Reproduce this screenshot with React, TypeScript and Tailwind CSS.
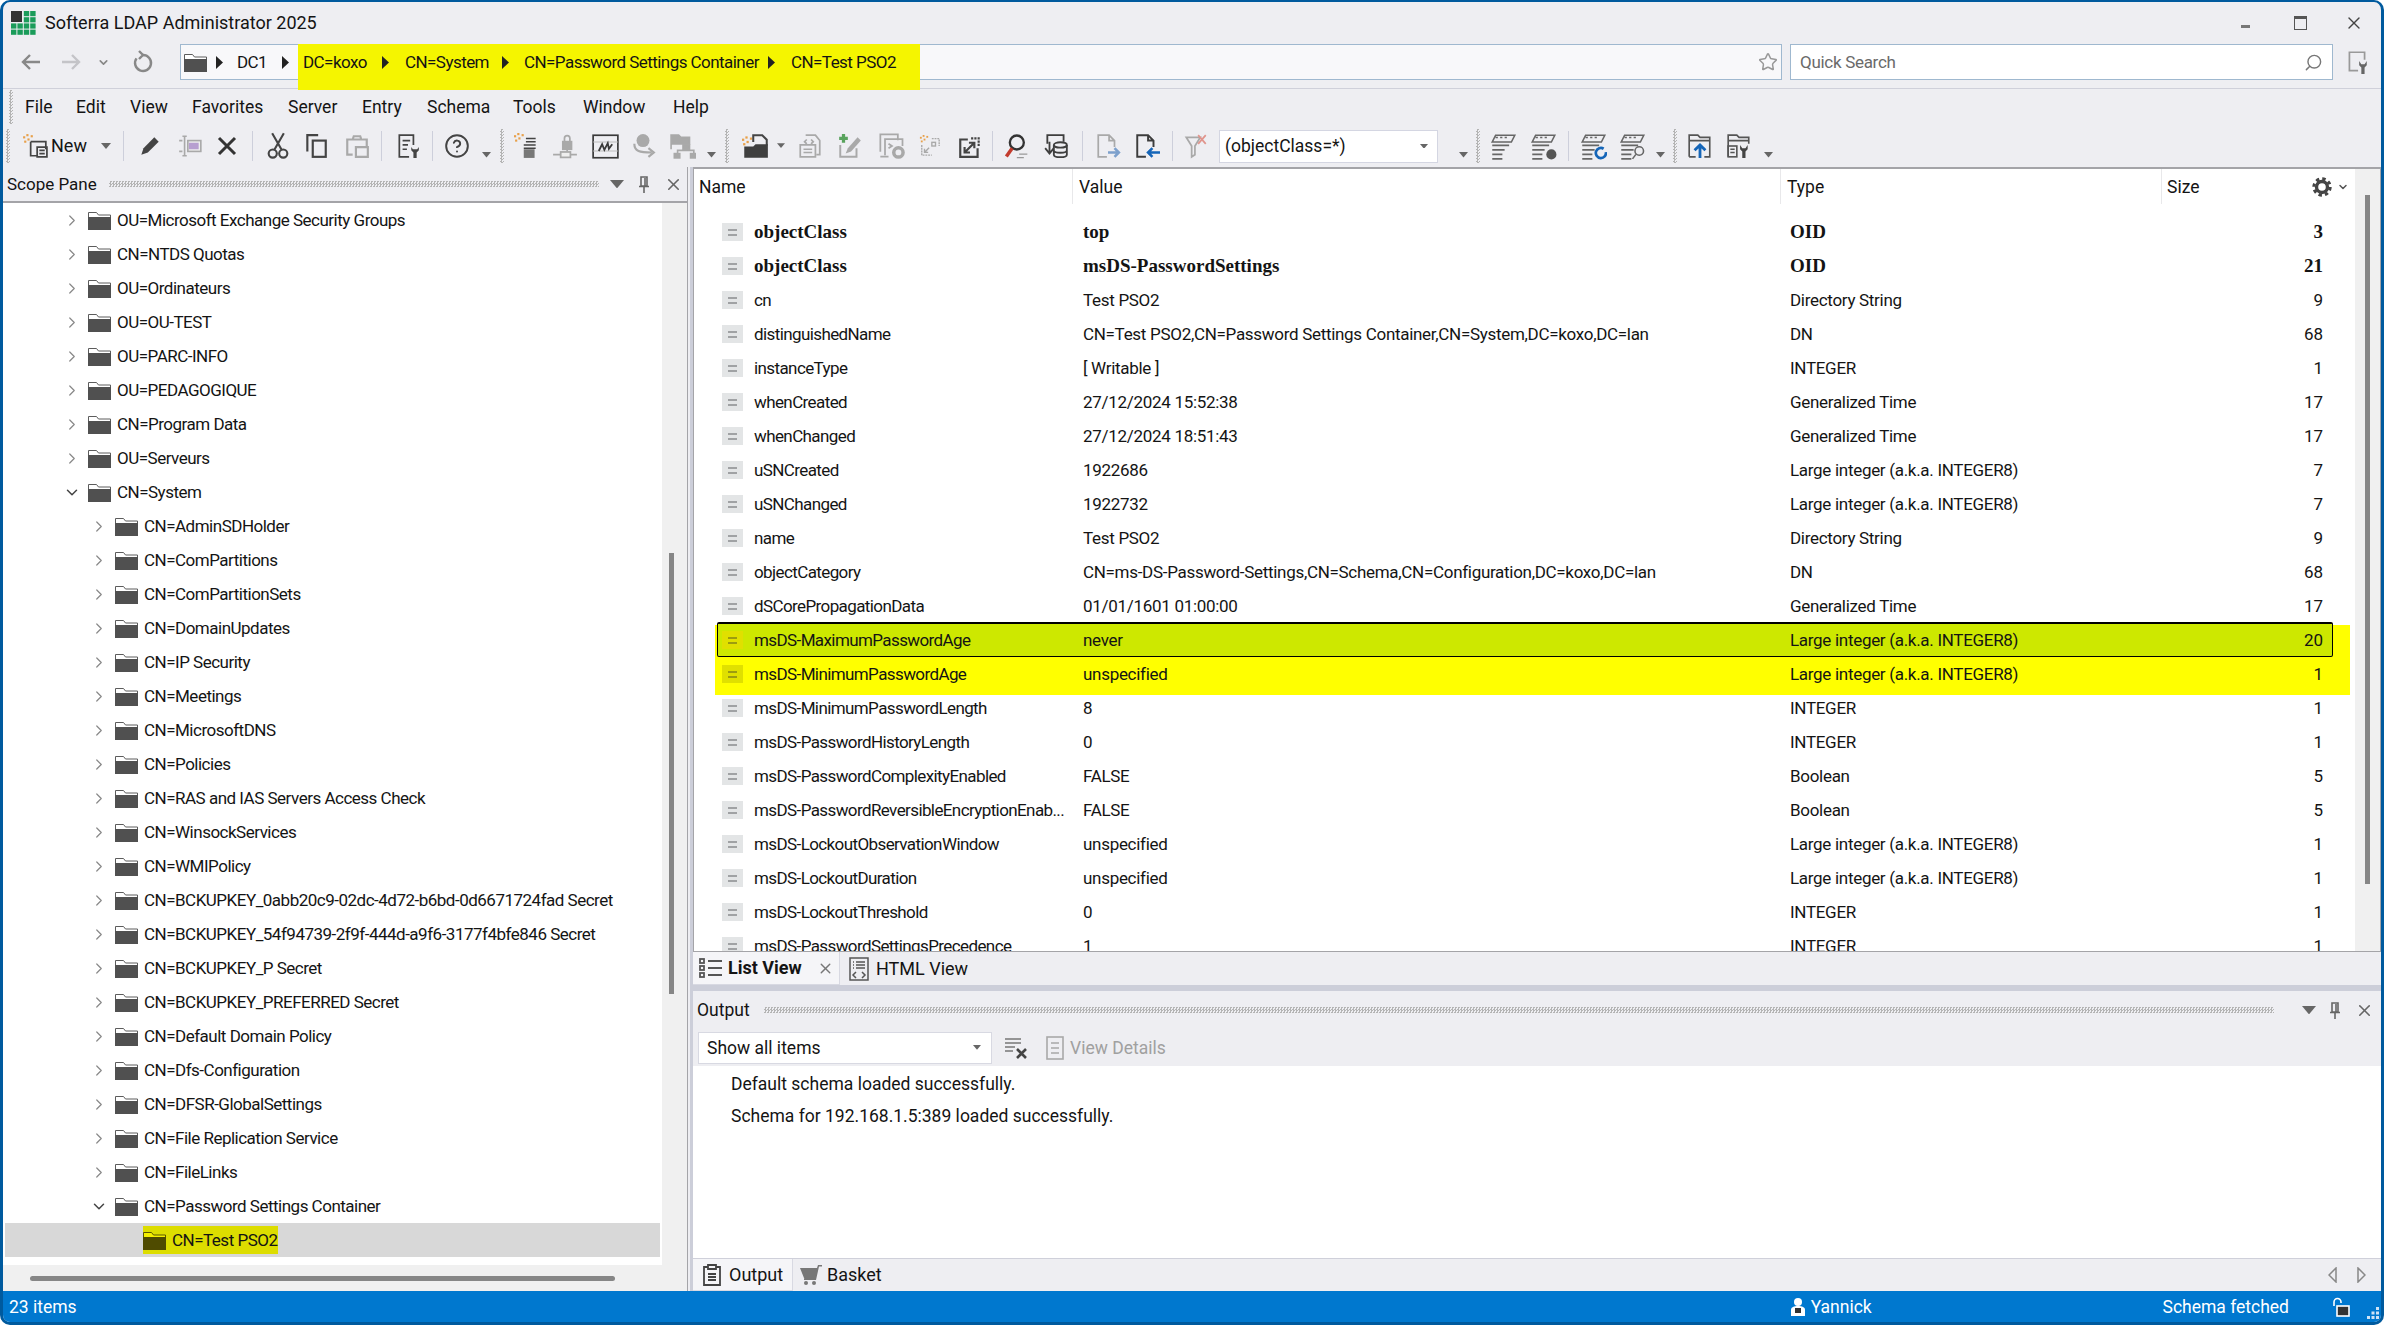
import { ReactNode } from "react";
import { ChevronRight, ChevronDown, CircleHelp, Star, Search, X } from "lucide-react";

const DARK = "#444";
const DIM = "#a9a9a9";

function Ic({ s = 26, c = DARK, w = 2, children }: { s?: number; c?: string; w?: number; children: ReactNode }) {
  return (
    <svg width={s} height={s} viewBox="0 0 24 24" fill="none" stroke={c} strokeWidth={w}>
      {children}
    </svg>
  );
}

function Spark({ x = 1, y = 1 }: { x?: number; y?: number }) {
  return (
    <g fill="#e8a04a" stroke="none" transform={`translate(${x} ${y})`}>
      <rect x="3" y="0" width="2" height="2" />
      <rect x="7" y="1" width="2" height="2" />
      <rect x="0" y="2" width="2" height="2" />
      <rect x="1" y="6" width="2" height="2" />
      <rect x="4" y="4" width="2" height="2" />
    </g>
  );
}

function Folder({ sel }: { sel?: boolean }) {
  return (
    <svg width="23" height="19" viewBox="0 0 23 19" className="shrink-0">
      <path d="M.5 18.5V1.5h8l2 2.5h12v14.5z" fill={sel ? "#f5f000" : "#fff"} stroke={sel ? "#5a5600" : "#5c5c5c"} />
      <rect x="0" y="6" width="23" height="13" fill={sel ? "#4f4b00" : "#505050"} />
    </svg>
  );
}

function Caret({ c = "#666", s = 10 }: { c?: string; s?: number }) {
  return (
    <svg width={s} height={s * 0.6} viewBox="0 0 10 6">
      <path d="M0 0h10L5 6z" fill={c} />
    </svg>
  );
}

function Crumb() {
  return (
    <svg width="7" height="13" viewBox="0 0 7 13" className="shrink-0">
      <path d="M0 0l7 6.5L0 13z" fill="#222" />
    </svg>
  );
}

function Pin() {
  return (
    <svg width="10" height="17" viewBox="0 0 10 17" fill="none" stroke="#666" strokeWidth="1.6">
      <path d="M2 1h6v9H2zM0 10.5h10M5 11v6M6 2v8" />
    </svg>
  );
}

function PaneButtons() {
  return (
    <>
      <Caret c="#666" s={14} />
      <Pin />
      <X size={19} color="#666" strokeWidth={2} />
    </>
  );
}

function Dots({ className }: { className: string }) {
  return <div className={`bg-[conic-gradient(#b4b4b4_25%,transparent_0_50%,#b4b4b4_0_75%,transparent_0)] bg-[length:3px_3px] ${className}`} />;
}

function Grip() {
  return <Dots className="w-[4px] h-[34px]" />;
}

function Slot({ w, children }: { w: string; children?: ReactNode }) {
  return <div className={`${w} shrink-0 flex items-center justify-center`}>{children}</div>;
}

function Sep() {
  return <div className="w-full flex justify-center"><div className="w-px h-[30px] bg-[#cdcfdb]" /></div>;
}

const TBCARET = <div className="mt-[18px]"><Caret c="#666" s={9} /></div>;

function Toolbar() {
  return (
    <div className="h-[42px] shrink-0 flex items-center">
      <Slot w="w-[10px]"><Grip /></Slot>
      <div className="w-[84px] shrink-0 flex items-center pl-[9px]">
        <Ic>
          <Spark />
          <path d="M8 8h14v7M8 8v13h6M14 13h9v9h-9zM16 16h5M16 19h5" strokeWidth="1.6" />
        </Ic>
        <span className="ml-[3px] text-[18px]">New</span>
      </div>
      <Slot w="w-[18px]"><Caret s={10} /></Slot>
      <Slot w="w-[16px]"><Sep /></Slot>
      <Slot w="w-[38px]">
        <Ic><path d="M4 20l2-6L16 4l4 4L10 18z" fill={DARK} stroke="none" /></Ic>
      </Slot>
      <Slot w="w-[42px]">
        <Ic c={DIM} w={1.5}>
          <path d="M5 3h4M5 21h4M7 3v18M2 7h3M2 17h3" />
          <rect x="10" y="7" width="12" height="10" fill="#eee" />
          <rect x="11" y="9" width="9" height="6" fill="#b79fd0" stroke="none" />
        </Ic>
      </Slot>
      <Slot w="w-[32px]">
        <Ic s={24} c="#333" w={3}><path d="M4 4l16 16M20 4L4 20" /></Ic>
      </Slot>
      <Slot w="w-[18px]"><Sep /></Slot>
      <Slot w="w-[34px]">
        <Ic s={28} c="#444" w={1.8}>
          <path d="M7 1l8 14M17 1L9 15" />
          <circle cx="7.5" cy="18.5" r="3.5" />
          <circle cx="16.5" cy="18.5" r="3.5" />
        </Ic>
      </Slot>
      <Slot w="w-[42px]">
        <Ic s={26}>
          <path d="M14 2H4v15" />
          <rect x="9" y="7" width="12" height="15" />
        </Ic>
      </Slot>
      <Slot w="w-[40px]">
        <Ic c={DIM} w={2}>
          <path d="M8 20H3V6h5M17 6h4v6M8 6l1-3h6l1 3zM11 13h11v9H11z" />
        </Ic>
      </Slot>
      <Slot w="w-[8px]"><Sep /></Slot>
      <Slot w="w-[46px]">
        <Ic>
          <path d="M13 22H4V2h13v9M7 7h7M7 11h5M7 15h4" strokeWidth="1.6" />
          <path d="M15 13v3l2 2v5h3v-5l2-2v-3l-1.5 2h-4z" fill={DARK} stroke="none" />
        </Ic>
      </Slot>
      <Slot w="w-[2px]"><Sep /></Slot>
      <Slot w="w-[48px]"><CircleHelp size={26} color={DARK} strokeWidth={1.8} /></Slot>
      <Slot w="w-[10px]">{TBCARET}</Slot>
      <Slot w="w-[22px]"><Grip /></Slot>
      <Slot w="w-[28px]">
        <Ic>
          <Spark x={0} y={0} />
          <path d="M11 5h9M11 8h9M9 11h11M9 14h11" strokeWidth="1.4" />
          <rect x="9" y="15" width="10" height="8" fill="#777" stroke="none" />
        </Ic>
      </Slot>
      <Slot w="w-[48px]">
        <Ic c={DIM} w={1.6}>
          <rect x="10" y="8" width="8" height="7" fill={DIM} />
          <path d="M11.5 8V5a2.5 2.5 0 015 0v3M1 20h7M17 20h6M14 15v2" />
          <rect x="8" y="17.5" width="9" height="5" fill="#eee" />
        </Ic>
      </Slot>
      <Slot w="w-[32px]">
        <Ic s={27} c="#3a3a3a" w={1.5}>
          <rect x="1" y="2" width="22" height="20" />
          <path d="M1 8h22M1 16h22" stroke="#bbb" strokeWidth="1" />
          <path d="M6 16l3-6 2 5 3-6 1 5 3-4" strokeWidth="1.6" />
        </Ic>
      </Slot>
      <Slot w="w-[44px]">
        <Ic c={DIM} w={2}>
          <circle cx="12" cy="7" r="6" fill={DIM} stroke="none" />
          <path d="M4 10c0 7 5 8 16 8M17 14l5 4-5 4" />
        </Ic>
      </Slot>
      <Slot w="w-[36px]">
        <Ic c={DIM} w={1.5}>
          <path d="M1 15V2h7l2 2h8v6H1z" fill={DIM} />
          <path d="M15 12v4M7 19v-3h15v3" />
          <rect x="12" y="11" width="6" height="4" fill={DIM} />
          <rect x="4" y="19" width="5" height="4" fill={DIM} />
          <rect x="19" y="19" width="5" height="4" fill={DIM} />
        </Ic>
      </Slot>
      <Slot w="w-[20px]">{TBCARET}</Slot>
      <Slot w="w-[12px]"><Grip /></Slot>
      <Slot w="w-[44px]">
        <Ic s={27}>
          <Spark x={0} y={3} />
          <path d="M10 8V2h8l4 4v5" strokeWidth="1.8" />
          <path d="M2 22V12h8l2-2h11v12z" fill="#3f3f3f" stroke="none" />
        </Ic>
      </Slot>
      <Slot w="w-[8px]"><Caret s={9} /></Slot>
      <Slot w="w-[50px]">
        <Ic c={DIM} w={1.6}>
          <path d="M8 2h9l4 5v13h-3M3 11h14v11H3zM6 15h8M6 18h8M9 6l-2 2 2 2M13 6l2 2-2 2" />
        </Ic>
      </Slot>
      <Slot w="w-[30px]">
        <Ic c={DIM} w={1.8}>
          <path d="M3 11v11h15v-8" />
          <path d="M8 19l2-5 9-10 3 3-9 10z" fill={DIM} stroke="none" />
          <path d="M6 1v8M2 5h8" stroke="#59a35d" strokeWidth="3" />
        </Ic>
      </Slot>
      <Slot w="w-[54px]">
        <Ic s={28} c={DIM} w={1.5}>
          <path d="M2 17V2h15v5M6 20V6h15v6M9 10l3 2-3 2M2 21h7" />
          <circle cx="17.5" cy="17.5" r="4" strokeWidth="3" />
        </Ic>
      </Slot>
      <Slot w="w-[22px]">
        <Ic c={DIM} w={1.5}>
          <Spark x={1} y={0} />
          <path d="M3 11v11h11M14 4h8v8" strokeDasharray="2 1" />
          <rect x="14" y="8" width="4" height="4" />
          <path d="M11 14l-5 5M6 15v4h4" />
        </Ic>
      </Slot>
      <div className="ml-[7px]" />
      <Slot w="w-[44px]">
        <Ic>
          <path d="M10 6H3v16h16v-8" />
          <path d="M13 5h7v8" strokeDasharray="2 1" />
          <path d="M7 18l9-9M7 13v5h5M16 14V9h-5" />
        </Ic>
      </Slot>
      <Slot w="w-px"><Sep /></Slot>
      <Slot w="w-[50px]">
        <Ic s={28} c="#333">
          <circle cx="11" cy="9" r="6" />
          <path d="M7 14l-5 7" stroke="#c33c2e" strokeWidth="3" />
          <path d="M13 19h7M11 22h6" stroke="#999" strokeWidth="1.2" />
        </Ic>
      </Slot>
      <Slot w="w-[26px]">
        <Ic s={28} c="#3e3e3e" w={1.7}>
          <path d="M4 10V2h15v6M2 14l4 5 4-5M6 8v10" />
          <ellipse cx="16" cy="11" rx="6" ry="2.5" />
          <path d="M10 11v9c0 3 12 3 12 0v-9M10 16c0 3 12 3 12 0" />
        </Ic>
      </Slot>
      <Slot w="w-[26px]"><Sep /></Slot>
      <Slot w="w-[26px]">
        <Ic c={DIM} w={1.6}>
          <path d="M11 22H3V2h10l5 5v6M13 2v5h5" />
          <path d="M12 18h10M18 14l4 4-4 4" stroke="#7da0cc" strokeWidth="2.4" />
        </Ic>
      </Slot>
      <Slot w="w-[51px]">
        <Ic c="#3c3c3c" w={1.8}>
          <path d="M11 22H3V2h10l5 5v6M13 2v5h5" />
          <path d="M24 18H13M17 14l-4 4 4 4" stroke="#1565b8" strokeWidth="2.4" />
        </Ic>
      </Slot>
      <Slot w="w-px"><Sep /></Slot>
      <Slot w="w-[46px]">
        <Ic c={DIM} w={1.6}>
          <path d="M3 4h13l-5 8v8l-3 2V12z" />
          <path d="M14 2l7 8M21 2l-7 8" stroke="#e0948c" />
        </Ic>
      </Slot>
      <div className="w-[219px] h-[33px] shrink-0 bg-white border border-[#d4d6e2] flex items-center pl-[5px] pr-[9px] justify-between text-[17.5px]">
        <span>(objectClass=*)</span>
        <Caret s={8} />
      </div>
      <div className="ml-[15px]" />
      <Slot w="w-[20px]">{TBCARET}</Slot>
      <Slot w="w-[10px]"><Grip /></Slot>
      <Slot w="w-[40px]"><Stack /></Slot>
      <Slot w="w-[40px]">
        <Stack>
          <circle cx="19" cy="19" r="4.5" fill="#555" stroke="none" />
        </Stack>
      </Slot>
      <Slot w="w-[10px]"><Sep /></Slot>
      <Slot w="w-[40px]">
        <Stack>
          <path d="M23 17a4.5 4.5 0 11-2-3" stroke="#1565b8" strokeWidth="2.4" />
        </Stack>
      </Slot>
      <Slot w="w-[38px]">
        <Stack>
          <circle cx="18" cy="16" r="3.8" />
          <path d="M15 19l-3 4" />
        </Stack>
      </Slot>
      <Slot w="w-[18px]">{TBCARET}</Slot>
      <Slot w="w-[12px]"><Grip /></Slot>
      <Slot w="w-[38px]">
        <Ic c="#555" w={1.5}>
          <path d="M2 22V2h8l2 2h9v18h-5M8 22H2M2 7h19" />
          <path d="M12 23V12M7 16l5-5 5 5" stroke="#1565b8" strokeWidth="2.6" />
        </Ic>
      </Slot>
      <Slot w="w-[40px]">
        <Ic c="#555" w={1.5}>
          <path d="M2 22V2h8l2 2h9v6M2 7h19" />
          <rect x="2" y="12" width="8" height="10" />
          <path d="M4 15h4M4 18h4" />
          <path d="M13 11v4l2 2v6h3v-6l2-2v-4l-2 3h-3z" fill="#444" stroke="none" />
        </Ic>
      </Slot>
      <Slot w="w-[18px]">{TBCARET}</Slot>
    </div>
  );
}

function Stack({ children }: { children?: ReactNode }) {
  return (
    <Ic s={27} c="#666" w={1.4}>
      <path d="M5 2h17l-3 6H2zM5 4h2M9 4h2M13 4h2" />
      <path d="M2 11h15M2 15h11M2 19h9M2 23h9" />
      {children}
    </Ic>
  );
}

const TREE: [number, string, number][] = [
  [0, "OU=Microsoft Exchange Security Groups", 1],
  [0, "CN=NTDS Quotas", 1],
  [0, "OU=Ordinateurs", 1],
  [0, "OU=OU-TEST", 1],
  [0, "OU=PARC-INFO", 1],
  [0, "OU=PEDAGOGIQUE", 1],
  [0, "CN=Program Data", 1],
  [0, "OU=Serveurs", 1],
  [0, "CN=System", 2],
  [1, "CN=AdminSDHolder", 1],
  [1, "CN=ComPartitions", 1],
  [1, "CN=ComPartitionSets", 1],
  [1, "CN=DomainUpdates", 1],
  [1, "CN=IP Security", 1],
  [1, "CN=Meetings", 1],
  [1, "CN=MicrosoftDNS", 1],
  [1, "CN=Policies", 1],
  [1, "CN=RAS and IAS Servers Access Check", 1],
  [1, "CN=WinsockServices", 1],
  [1, "CN=WMIPolicy", 1],
  [1, "CN=BCKUPKEY_0abb20c9-02dc-4d72-b6bd-0d6671724fad Secret", 1],
  [1, "CN=BCKUPKEY_54f94739-2f9f-444d-a9f6-3177f4bfe846 Secret", 1],
  [1, "CN=BCKUPKEY_P Secret", 1],
  [1, "CN=BCKUPKEY_PREFERRED Secret", 1],
  [1, "CN=Default Domain Policy", 1],
  [1, "CN=Dfs-Configuration", 1],
  [1, "CN=DFSR-GlobalSettings", 1],
  [1, "CN=File Replication Service", 1],
  [1, "CN=FileLinks", 1],
  [1, "CN=Password Settings Container", 2],
];

const ROWS: [string, string, string, number][] = [
  ["objectClass", "top", "OID", 3],
  ["objectClass", "msDS-PasswordSettings", "OID", 21],
  ["cn", "Test PSO2", "Directory String", 9],
  ["distinguishedName", "CN=Test PSO2,CN=Password Settings Container,CN=System,DC=koxo,DC=lan", "DN", 68],
  ["instanceType", "[ Writable ]", "INTEGER", 1],
  ["whenCreated", "27/12/2024 15:52:38", "Generalized Time", 17],
  ["whenChanged", "27/12/2024 18:51:43", "Generalized Time", 17],
  ["uSNCreated", "1922686", "Large integer (a.k.a. INTEGER8)", 7],
  ["uSNChanged", "1922732", "Large integer (a.k.a. INTEGER8)", 7],
  ["name", "Test PSO2", "Directory String", 9],
  ["objectCategory", "CN=ms-DS-Password-Settings,CN=Schema,CN=Configuration,DC=koxo,DC=lan", "DN", 68],
  ["dSCorePropagationData", "01/01/1601 01:00:00", "Generalized Time", 17],
  ["msDS-MaximumPasswordAge", "never", "Large integer (a.k.a. INTEGER8)", 20],
  ["msDS-MinimumPasswordAge", "unspecified", "Large integer (a.k.a. INTEGER8)", 1],
  ["msDS-MinimumPasswordLength", "8", "INTEGER", 1],
  ["msDS-PasswordHistoryLength", "0", "INTEGER", 1],
  ["msDS-PasswordComplexityEnabled", "FALSE", "Boolean", 5],
  ["msDS-PasswordReversibleEncryptionEnab...", "FALSE", "Boolean", 5],
  ["msDS-LockoutObservationWindow", "unspecified", "Large integer (a.k.a. INTEGER8)", 1],
  ["msDS-LockoutDuration", "unspecified", "Large integer (a.k.a. INTEGER8)", 1],
  ["msDS-LockoutThreshold", "0", "INTEGER", 1],
  ["msDS-PasswordSettingsPrecedence", "1", "INTEGER", 1],
];

function AttrIcon({ hl }: { hl?: boolean }) {
  return (
    <div className={`w-[21px] h-[18px] shrink-0 flex flex-col items-center justify-center gap-[3px] ${hl ? "bg-[#e0e000]" : "bg-[#e3e5e6]"}`}>
      <div className={`w-[9px] h-[2px] ${hl ? "bg-[#9c9c10]" : "bg-[#a0a2a4]"}`} />
      <div className={`w-[9px] h-[2px] ${hl ? "bg-[#9c9c10]" : "bg-[#a0a2a4]"}`} />
    </div>
  );
}

function Cells({ row, bold, hl }: { row: [string, string, string, number]; bold?: boolean; hl?: boolean }) {
  const face = bold ? "font-['Liberation_Serif',serif] font-bold text-[19px]" : "text-[17px]";
  return (
    <>
      <AttrIcon hl={hl} />
      <div className={`ml-[11px] w-[329px] shrink-0 whitespace-nowrap ${bold ? "" : "tracking-[-0.6px]"} ${face}`}>{row[0]}</div>
      <div className={`w-[707px] shrink-0 whitespace-nowrap ${bold ? "" : "tracking-[-0.3px]"} ${face}`}>{row[1]}</div>
      <div className={`w-[370px] shrink-0 whitespace-nowrap ${bold ? "" : "tracking-[-0.3px]"} ${face}`}>{row[2]}</div>
      <div className={`flex-1 text-right ${face}`}>{row[3]}</div>
    </>
  );
}

function AttrRow({ row, i }: { row: [string, string, string, number]; i: number }) {
  if (i === 12) {
    return (
      <div className="h-[32px] mt-[2px] ml-[21px] mr-[5px] bg-[#ffff00]">
        <div className="h-[35px] relative top-[-3px] ml-[2px] mr-[17px] border border-black border-t-2 rounded-[2px] bg-[#cde800] flex items-center pl-[4px] pr-[9px]">
          <Cells row={row} hl />
        </div>
      </div>
    );
  }
  if (i === 13) {
    return (
      <div className="h-[38px] -mb-[4px] ml-[21px] mr-[5px] bg-[#ffff00] pl-[7px] pr-[27px]">
        <div className="h-[34px] flex items-center">
          <Cells row={row} hl />
        </div>
      </div>
    );
  }
  return (
    <div className="h-[34px] pl-[28px] pr-[32px] flex items-center">
      <Cells row={row} bold={i < 2} />
    </div>
  );
}

function Gear() {
  return (
    <svg width="20" height="20" viewBox="0 0 20 20" fill="none" stroke="#444">
      <circle cx="10" cy="10" r="8.2" strokeWidth="3" strokeDasharray="3.4 3.04" />
      <circle cx="10" cy="10" r="5.5" strokeWidth="3.4" />
    </svg>
  );
}

function ListPanel() {
  return (
    <div className="h-[785px] shrink-0 bg-white border-t-2 border-x border-b border-[#a4a4a8] flex overflow-hidden">
      <div className="flex-1 min-w-0 flex flex-col">
        <div className="h-[35px] shrink-0 flex items-center text-[17.5px]">
          <div className="w-[379px] h-full border-r border-[#e8e8ea] pl-[5px] flex items-center">Name</div>
          <div className="w-[708px] h-full border-r border-[#e8e8ea] pl-[6px] flex items-center">Value</div>
          <div className="w-[381px] h-full border-r border-[#e8e8ea] pl-[6px] flex items-center">Type</div>
          <div className="flex-1 pl-[5px] flex items-center">Size</div>
          <div className="pr-[6px] flex items-center gap-[5px]">
            <Gear />
            <ChevronDown size={12} color="#555" strokeWidth={3} />
          </div>
        </div>
        <div className="pt-[11px]">
          {ROWS.map((r, i) => (
            <AttrRow key={i} row={r} i={i} />
          ))}
        </div>
      </div>
      <div className="w-[25px] shrink-0 bg-[#f0f0f0] pt-[26px] pl-[10px]">
        <div className="w-[5px] h-[689px] bg-[#868686]" />
      </div>
    </div>
  );
}

function TreePanel() {
  return (
    <div className="w-[685px] shrink-0 flex flex-col border-r border-[#a4a4a8]">
      <div className="h-[34px] shrink-0 flex items-center pl-[4px] pr-[4px] text-[17px]">
        <span>Scope Pane</span>
        <Dots className="ml-[12px] w-[490px] h-[6px]" />
        <div className="flex-1 flex items-center justify-between pl-[11px] pr-0">
          <PaneButtons />
        </div>
      </div>
      <div className="flex-1 min-h-0 flex flex-col border-t-2 border-[#a4a4a8]">
        <div className="flex-1 min-h-0 flex">
          <div className="w-[659px] shrink-0 bg-white overflow-hidden text-[17px] tracking-[-0.5px]">
            {TREE.map(([lvl, label, kind], i) => (
              <div key={i} className={`h-[34px] flex items-center ${lvl === 0 ? "pl-[60px]" : "pl-[87px]"}`}>
                <div className="w-[18px] flex justify-center">
                  {kind === 2 ? <ChevronDown size={19} color="#444" strokeWidth={2} /> : <ChevronRight size={19} color="#888" strokeWidth={1.6} />}
                </div>
                <div className="ml-[7px]"><Folder /></div>
                <span className="ml-[6px] whitespace-nowrap">{label}</span>
              </div>
            ))}
            <div className="h-[34px] bg-[#d8d8d8] flex items-center pl-[138px] mx-[2px]">
              <div className="h-[28px] bg-[#dddd00] flex items-center pr-px">
                <Folder sel />
                <span className="ml-[6px] whitespace-nowrap">CN=Test PSO2</span>
              </div>
            </div>
          </div>
          <div className="flex-1 bg-[#f0f0f0] pt-[350px] pl-[7px]">
            <div className="w-[5px] h-[441px] bg-[#868686]" />
          </div>
        </div>
        <div className="h-[26px] shrink-0 bg-[#f0f0f0] flex items-center pl-[27px]">
          <div className="w-[585px] h-[5px] rounded-full bg-[#868686]" />
        </div>
      </div>
    </div>
  );
}

export default function App() {
  const menu: [string, string][] = [
    ["File", "w-[51px]"],
    ["Edit", "w-[54px]"],
    ["View", "w-[62px]"],
    ["Favorites", "w-[96px]"],
    ["Server", "w-[74px]"],
    ["Entry", "w-[65px]"],
    ["Schema", "w-[86px]"],
    ["Tools", "w-[70px]"],
    ["Window", "w-[90px]"],
    ["Help", "w-[50px]"],
  ];
  return (
    <div className="w-[2384px] h-[1325px] overflow-hidden bg-white font-['Roboto',sans-serif] text-[18px] leading-[24px] text-[#141414]">
      <div className="w-full h-full flex flex-col bg-[#eeeef2] border-[#005a9e] border-t-2 border-x-[3px] border-b-[3px] rounded-[10px] overflow-hidden">
        {/* title */}
        <div className="h-[42px] shrink-0 flex items-center pl-[8px] pr-[17px]">
          <svg width="25" height="24" viewBox="0 0 25 24">
            <rect x="0" y="0" width="11" height="11" fill="#333" />
            {[0, 1, 2, 3].flatMap((r) =>
              [0, 1, 2, 3].map((c) =>
                r < 2 && c < 2 ? null : <rect key={`${r}${c}`} x={c * 6.4} y={r * 6.2} width="5.4" height="5.2" fill="#1a9c5a" />
              )
            )}
          </svg>
          <span className="ml-[9px]">Softerra LDAP Administrator 2025</span>
          <div className="ml-auto flex items-center">
            <div className="w-[9px] h-[3px] bg-[#777] mt-[6px]" />
            <div className="ml-[44px] w-[13px] h-[14px] border border-[#555] border-t-[3px]" />
            <div className="ml-[37px]"><X size={20} color="#444" strokeWidth={1.6} /></div>
          </div>
        </div>
        {/* address */}
        <div className="h-[45px] shrink-0 border-b border-[#cfd0da] flex items-start">
          <div className="w-[177px] h-[36px] shrink-0 flex items-center pl-[16px]">
            <Ic s={24} c="#888" w={2.4}><path d="M21 12H4M11 5l-7 7 7 7" /></Ic>
            <div className="ml-[16px]"><Ic s={24} c="#c4c4c8" w={2.4}><path d="M3 12h17M13 5l7 7-7 7" /></Ic></div>
            <div className="ml-[14px]"><ChevronDown size={13} color="#888" strokeWidth={3} /></div>
            <div className="ml-[21px]">
              <Ic s={24} c="#888" w={2.4}>
                <path d="M12 5a8 8 0 11-6.5 3.4" />
                <path d="M8 1l4 4-4 4" />
              </Ic>
            </div>
          </div>
          <div className="w-[1602px] h-[36px] shrink-0 border border-[#9fb8cf] bg-[#f8f8fa] flex items-center text-[17px] tracking-[-0.55px]">
            <div className="ml-[3px]"><Folder /></div>
            <div className="ml-[9px]"><Crumb /></div>
            <span className="ml-[14px] w-[31px]">DC1</span>
            <div className="ml-[14px]"><Crumb /></div>
            <div className="ml-[9px] w-[622px] h-[46px] shrink-0 self-start -mt-px bg-[#f5f500] flex items-start">
              <div className="h-[36px] flex items-center pl-[5px] whitespace-nowrap">
                <span className="w-[79px]">DC=koxo</span>
                <Crumb />
                <span className="ml-[16px] w-[97px]">CN=System</span>
                <Crumb />
                <span className="ml-[15px] w-[244px]">CN=Password Settings Container</span>
                <Crumb />
                <span className="ml-[16px]">CN=Test PSO2</span>
              </div>
            </div>
            <div className="ml-auto mr-[3px]"><Star size={20} color="#999" strokeWidth={1.8} /></div>
          </div>
          <div className="ml-[8px] w-[543px] h-[36px] shrink-0 border border-[#9fb8cf] bg-white flex items-center pl-[9px] pr-[9px] justify-between text-[#6a6a6a] text-[17px] tracking-[-0.3px]">
            <span>Quick Search</span>
            <Search size={19} color="#777" strokeWidth={1.8} className="-scale-x-100" />
          </div>
          <div className="ml-[11px] h-[36px] flex items-center">
            <Ic s={26} c="#999" w={1.6}>
              <path d="M13 20H5V3h14v7" />
              <path d="M14 11v4l2 2v6h3v-6l2-2v-4l-2 3h-3z" fill="#666" stroke="none" />
            </Ic>
          </div>
        </div>
        {/* menu */}
        <div className="h-[36px] shrink-0 flex items-center text-[17.5px]">
          <div className="w-[22px] shrink-0 flex justify-center pr-[6px]"><Grip /></div>
          {menu.map(([m, w]) => (
            <div key={m} className={`${w} shrink-0`}>{m}</div>
          ))}
        </div>
        <Toolbar />
        {/* body */}
        <div className="flex-1 min-h-0 flex">
          <TreePanel />
          <div className="w-[2px] shrink-0" />
          <div className="flex-1 min-w-0 flex flex-col border-l-[3px] border-[#ccced9]">
            <ListPanel />
            <div className="h-[33px] shrink-0 flex">
              <div className="w-[147px] h-[33px] bg-[#f5f5f8] border-r border-b border-[#d8d9e2] flex items-center pl-[6px]">
                <Ic s={24} c="#555" w={1.8}>
                  <path d="M9 5h14M9 12h14M9 19h14" />
                  <rect x="1" y="3" width="4" height="4" />
                  <rect x="1" y="10" width="4" height="4" />
                  <rect x="1" y="17" width="4" height="4" />
                </Ic>
                <span className="ml-[5px] font-bold">List View</span>
                <div className="ml-[15px]"><X size={17} color="#777" strokeWidth={2} /></div>
              </div>
              <div className="ml-[7px] flex items-center">
                <Ic s={24} c="#555" w={1.5}>
                  <rect x="3" y="1" width="18" height="22" />
                  <path d="M9 5h9M9 8h9M9 11h9M6 5h1M6 8h1M6 11h1M9 15l-3 3 3 3M15 15l3 3-3 3" />
                </Ic>
                <span className="ml-[5px]">HTML View</span>
              </div>
            </div>
            <div className="h-[6px] shrink-0 bg-[#ccced9]" />
            <div className="h-[38px] shrink-0 flex items-center pl-[4px] pr-[5px] text-[17.5px]">
              <span>Output</span>
              <Dots className="ml-[14px] w-[1510px] h-[6px]" />
              <div className="flex-1 flex items-center justify-between pl-[28px] pr-[2px]">
                <PaneButtons />
              </div>
            </div>
            <div className="h-[37px] shrink-0 flex items-center pl-[5px] text-[17.5px]">
              <div className="w-[294px] h-[32px] bg-white border border-[#d8d9e2] flex items-center justify-between pl-[8px] pr-[10px]">
                <span>Show all items</span>
                <Caret s={8} />
              </div>
              <div className="ml-[12px]">
                <Ic s={24} c="#777" w={1.6}>
                  <path d="M1 3h16M1 7h16M1 11h10M1 15h8" />
                  <path d="M13 13l9 9M22 13l-9 9" stroke="#444" strokeWidth="2.6" />
                </Ic>
              </div>
              <div className="ml-[15px]">
                <Ic s={24} c="#a8a8a8" w={1.6}>
                  <rect x="4" y="1" width="16" height="22" />
                  <path d="M8 7h8M8 12h8M8 17h8" />
                </Ic>
              </div>
              <span className="ml-[3px] text-[#a0a0a0]">View Details</span>
            </div>
            <div className="flex-1 min-h-0 bg-white pl-[38px] pt-[6px] flex flex-col gap-[8px] text-[17.5px]">
              <div>Default schema loaded successfully.</div>
              <div>Schema for 192.168.1.5:389 loaded successfully.</div>
            </div>
            <div className="h-[33px] shrink-0 border-t border-[#cfd0da] flex items-center">
              <div className="w-[100px] h-full bg-[#f5f5f8] border-r border-b border-[#d8d9e2] flex items-center pl-[7px]">
                <Ic s={24} c="#444" w={1.8}>
                  <path d="M8 4H4v18h16V4h-4M8 2h8v4H8zM8 11h8M8 14h8M8 17h8" />
                </Ic>
                <span className="ml-[5px]">Output</span>
              </div>
              <div className="ml-[6px] flex items-center">
                <svg width="24" height="24" viewBox="0 0 24 24" fill="#777">
                  <path d="M1 5h17l-2 10H5zM18 5l1-3h4v1.5h-3L17 17H5v-1.5" />
                  <circle cx="7" cy="20" r="2" />
                  <circle cx="15" cy="20" r="2" />
                </svg>
                <span className="ml-[4px]">Basket</span>
              </div>
              <div className="ml-auto flex items-center gap-[20px] pr-[15px]">
                <svg width="9" height="16" viewBox="0 0 9 16" fill="none" stroke="#888" strokeWidth="1.5"><path d="M8 1L1 8l7 7z" /></svg>
                <svg width="9" height="16" viewBox="0 0 9 16" fill="none" stroke="#888" strokeWidth="1.5"><path d="M1 1l7 7-7 7z" /></svg>
              </div>
            </div>
          </div>
        </div>
        {/* status */}
        <div className="h-[31px] shrink-0 bg-[#0078cf] text-white flex items-center pl-[6px] pr-[2px] pt-px text-[17.5px]">
          <span>23 items</span>
          <div className="ml-[1713px] flex items-center">
            <svg width="16" height="20" viewBox="0 0 16 20" fill="#fff"><circle cx="8" cy="5" r="4" /><path d="M1 19v-6c0-3 3-4 7-4s7 1 7 4v6z" /><rect x="5" y="11" width="6" height="5" fill="#333" /></svg>
            <span className="ml-[5px]">Yannick</span>
          </div>
          <span className="ml-auto whitespace-nowrap">Schema fetched</span>
          <div className="ml-[43px]">
            <svg width="18" height="20" viewBox="0 0 18 20" fill="none" stroke="#fff" strokeWidth="1.6"><path d="M2 9V5a3.5 3.5 0 017 0v1" /><rect x="5" y="9" width="12" height="10" fill="#333" /></svg>
          </div>
          <div className="ml-[17px] mb-[-12px]">
            <svg width="12" height="12" viewBox="0 0 12 12" fill="#cfe3f5"><rect x="9" y="0" width="3" height="3" /><rect x="4.5" y="4.5" width="3" height="3" /><rect x="9" y="4.5" width="3" height="3" /><rect x="0" y="9" width="3" height="3" /><rect x="4.5" y="9" width="3" height="3" /><rect x="9" y="9" width="3" height="3" /></svg>
          </div>
        </div>
      </div>
    </div>
  );
}
